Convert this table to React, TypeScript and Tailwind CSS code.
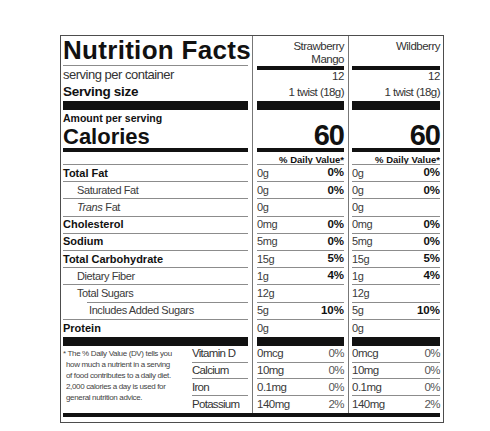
import type { ReactNode } from 'react'

type Row = {
  label: ReactNode
  bold?: boolean
  indent?: 0 | 1 | 2
  a: [string, string]
  b: [string, string]
  lineIndent?: boolean
  noLine?: boolean
}

const rows: Row[] = [
  { label: 'Total Fat', bold: true, a: ['0g', '0%'], b: ['0g', '0%'] },
  { label: 'Saturated Fat', indent: 1, a: ['0g', '0%'], b: ['0g', '0%'] },
  {
    label: (
      <>
        <i className="mr-[3px]">Trans</i>Fat
      </>
    ),
    indent: 1,
    a: ['0g', ''],
    b: ['0g', ''],
  },
  { label: 'Cholesterol', bold: true, a: ['0mg', '0%'], b: ['0mg', '0%'] },
  { label: 'Sodium', bold: true, a: ['5mg', '0%'], b: ['5mg', '0%'] },
  { label: 'Total Carbohydrate', bold: true, a: ['15g', '5%'], b: ['15g', '5%'] },
  { label: 'Dietary Fiber', indent: 1, a: ['1g', '4%'], b: ['1g', '4%'] },
  { label: 'Total Sugars', indent: 1, a: ['12g', ''], b: ['12g', ''], lineIndent: true },
  { label: 'Includes Added Sugars', indent: 2, a: ['5g', '10%'], b: ['5g', '10%'] },
  { label: 'Protein', bold: true, a: ['0g', ''], b: ['0g', ''], noLine: true },
]

const vitamins = [
  { name: 'Vitamin D', a: ['0mcg', '0%'], b: ['0mcg', '0%'] },
  { name: 'Calcium', a: ['10mg', '0%'], b: ['10mg', '0%'] },
  { name: 'Iron', a: ['0.1mg', '0%'], b: ['0.1mg', '0%'] },
  { name: 'Potassium', a: ['140mg', '2%'], b: ['140mg', '2%'] },
]

const footnote = [
  '* The % Daily Value (DV) tells you',
  'how much a nutrient in a serving',
  'of food contributes to a daily diet.',
  '2,000 calories a day is used for',
  'general nutrition advice.',
]

function Line({ indent = false }: { indent?: boolean }) {
  return <div className={`h-px bg-[#8c8c8c] ${indent ? 'ml-[24px]' : ''}`} />
}

function LeftColumn() {
  return (
    <div className="mr-[4px] flex w-[185px] flex-col">
      <div className="h-[29px] whitespace-nowrap text-[26px] font-bold leading-[29px] tracking-[0.3px] text-[#111]">
        Nutrition Facts
      </div>
      <Line />
      <div className="flex h-[17px] items-center text-[13px] tracking-[-0.5px] text-[#333]">
        serving per container
      </div>
      <div className="flex h-[18px] items-center text-[13.5px] font-bold tracking-[-0.3px] text-[#111]">
        Serving size
      </div>
      <div className="h-[9px] bg-[#111]" />
      <div className="flex h-[14px] items-end pb-[1px] text-[10.5px] font-bold leading-none text-[#111]">
        Amount per serving
      </div>
      <div className="flex h-[24px] items-end text-[22px] font-bold leading-none text-[#111]">
        Calories
      </div>
      <div className="h-[4px] bg-[#111]" />
      <div className="h-[12px]" />
      <Line />
      {rows.map((r, i) => (
        <div key={i} className="flex h-[17.2px] flex-col">
          <div
            className={`flex flex-1 items-center text-[11px] leading-none ${
              r.bold ? 'font-bold text-[#111]' : 'tracking-[-0.4px] text-[#3a3a3a]'
            } ${r.indent === 1 ? 'pl-[14px]' : r.indent === 2 ? 'pl-[26px]' : ''}`}
          >
            {r.label}
          </div>
          {!r.noLine && <Line indent={r.lineIndent} />}
        </div>
      ))}
      <div className="h-[9px] bg-[#111]" />
      <div className="flex h-[67px]">
        <div className="w-[128px] pt-[2px] text-[8px] leading-[11px] tracking-[-0.35px] text-[#444]">
          {footnote.map((t, i) => (
            <div key={i} className={`whitespace-nowrap ${i > 0 ? 'pl-[3px]' : ''}`}>
              {t}
            </div>
          ))}
        </div>
        <div className="ml-auto flex w-[56px] flex-col">
          {vitamins.map((v, i) => (
            <div key={v.name} className="flex h-[16.75px] flex-col">
              <div className="flex flex-1 items-center whitespace-nowrap text-[11.5px] leading-none tracking-[-0.7px] text-[#333]">
                {v.name}
              </div>
              {i < vitamins.length - 1 && <Line />}
            </div>
          ))}
        </div>
      </div>
    </div>
  )
}

function ValueColumn({
  name,
  pick,
  width,
}: {
  name: string[]
  pick: 'a' | 'b'
  width: string
}) {
  return (
    <div className={`flex flex-col ${width}`}>
      <div className="h-[30px] pt-[4px] text-right text-[11.5px] leading-[13px] tracking-[-0.5px] text-[#333]">
        {name.map((n) => (
          <div key={n}>{n}</div>
        ))}
      </div>
      <div className="h-[4px] bg-[#111]" />
      <div className="flex h-[14px] items-center justify-end text-[11.5px] leading-none tracking-[-0.4px] text-[#333]">
        12
      </div>
      <div className="flex h-[17px] items-center justify-end whitespace-nowrap text-[11.5px] leading-none tracking-[-0.55px] text-[#333]">
        1 twist (18g)
      </div>
      <div className="h-[9px] bg-[#111]" />
      <div className="flex h-[38px] items-end justify-end text-[29px] font-bold leading-[26px] tracking-[-1px] text-[#111]">
        60
      </div>
      <div className="h-[4px] bg-[#111]" />
      <div className="flex h-[12px] items-end justify-end text-[9.5px] font-bold leading-none text-[#111]">
        % Daily Value*
      </div>
      <Line />
      {rows.map((r, i) => (
        <div key={i} className="flex h-[17.2px] flex-col">
          <div className="flex flex-1 items-center justify-between leading-none">
            <span className="text-[11px] tracking-[-0.4px] text-[#3a3a3a]">{r[pick][0]}</span>
            <span className="text-[11.5px] font-bold text-[#111]">{r[pick][1]}</span>
          </div>
          {!r.noLine && <Line />}
        </div>
      ))}
      <div className="h-[9px] bg-[#111]" />
      {vitamins.map((v, i) => (
        <div key={v.name} className="flex h-[16.75px] flex-col">
          <div className="flex flex-1 items-center justify-between text-[11.5px] leading-none tracking-[-0.5px] text-[#3a3a3a]">
            <span>{v[pick][0]}</span>
            <span className="text-[#555]">{v[pick][1]}</span>
          </div>
          {i < vitamins.length - 1 && <Line />}
        </div>
      ))}
    </div>
  )
}

export default function App() {
  return (
    <div className="min-h-screen bg-white pl-[60px] pt-[35px] font-['Liberation_Sans',Arial,sans-serif]">
      <div className="w-[384px] border border-[#4d4d4d] bg-white">
        <div className="flex pl-[2px] pr-[3px]">
          <LeftColumn />
          <div className="border-l border-[#777] px-[4px]">
            <ValueColumn name={['Strawberry', 'Mango']} pick="a" width="w-[87px]" />
          </div>
          <div className="border-l border-[#777] pl-[3px]">
            <ValueColumn name={['Wildberry']} pick="b" width="w-[88px]" />
          </div>
        </div>
        <div className="ml-[2px] mr-[3px] h-[4px] bg-[#111]" />
        <div className="h-[5px]" />
      </div>
    </div>
  )
}
